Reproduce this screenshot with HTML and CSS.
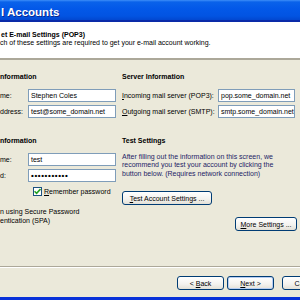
FILE: index.html
```
<!DOCTYPE html>
<html>
<head>
    <title>E-mail Accounts</title>
    <link rel="stylesheet" href="styles.css">
</head>
<body>
    <div class="window">
        <div class="titlebar"><span class="title">l Accounts</span></div>

        <div class="header">
            <div class="header-title">et E-mail Settings (POP3)</div>
            <div class="header-sub">ch of these settings are required to get your e-mail account working.</div>
        </div>

        <div class="content">
            <div class="col col-left">
                <div class="section">nformation</div>
                <div class="field">
                    <span class="label">me:</span>
                    <span class="box">Stephen Coles</span>
                </div>
                <div class="field">
                    <span class="label">ddress:</span>
                    <span class="box">test@some_domain.net</span>
                </div>

                <div class="section section-low">nformation</div>
                <div class="field">
                    <span class="label">me:</span>
                    <span class="box">test</span>
                </div>
                <div class="field">
                    <span class="label">d:</span>
                    <span class="box box-pass">•••••••••••</span>
                </div>
                <div class="check-row">
                    <span class="check">
                        <svg width="7" height="7" viewBox="0 0 7 7"><path d="M0.5 3.2 L2.6 5.4 L6.5 1" fill="none" stroke="#21a121" stroke-width="1.6"/></svg>
                    </span>
                    <span><u>R</u>emember password</span>
                </div>
                <div class="spa">n using Secure Password<br>entication (SPA)</div>
            </div>

            <div class="col col-right">
                <div class="section">Server Information</div>
                <div class="field field-wide">
                    <span class="label"><u>I</u>ncoming mail server (POP3):</span>
                    <span class="box">pop.some_domain.net</span>
                </div>
                <div class="field field-wide">
                    <span class="label"><u>O</u>utgoing mail server (SMTP):</span>
                    <span class="box">smtp.some_domain.net<span class="caret"></span></span>
                </div>

                <div class="section section-low">Test Settings</div>
                <p class="note">After filling out the information on this screen, we recommend you test your account by clicking the button below. (Requires network connection)</p>
                <button class="btn btn-test"><u>T</u>est Account Settings ...</button>
                <div class="more-row">
                    <button class="btn btn-more"><u>M</u>ore Settings ...</button>
                </div>
            </div>
        </div>

        <div class="footer">
            <button class="btn btn-nav">&lt; <u>B</u>ack</button>
            <button class="btn btn-nav btn-default"><u>N</u>ext &gt;</button>
            <button class="btn btn-nav btn-cancel">Cancel</button>
        </div>
    </div>
</body>
</html>
```

FILE: styles.css
```
body {
    margin: 0;
    font-family: "Liberation Sans", Arial, sans-serif;
    font-size: 7px;
    color: #000;
}
.window {
    width: 300px;
    height: 300px;
    overflow: hidden;
    background-color: #ebe9da;
    display: flex;
    flex-direction: column;
    border-bottom: 3px solid #0831d9;
    box-sizing: border-box;
}
.titlebar {
    height: 20px;
    flex-shrink: 0;
    background: linear-gradient(#3d8ef8 0, #0a62ea 2px, #0358e8 9px, #0254e2 16px, #0247d0 20px);
    border-bottom: 2px solid #0a2aa8;
}
.title {
    display: block;
    color: #fff;
    font-size: 11.5px;
    font-weight: bold;
    line-height: 20px;
    padding-left: 1px;
    padding-top: 2px;
    text-shadow: 1px 1px 0 #0b2a92;
}
.header {
    height: 38px;
    flex-shrink: 0;
    background-color: #fff;
    border-bottom: 2px solid #aca899;
    box-sizing: border-box;
    padding-top: 9px;
    line-height: 7.5px;
}
.header-title {
    font-weight: bold;
    padding-left: 1px;
}
.content {
    flex: 1;
    display: flex;
}
.col {
    display: flex;
    flex-direction: column;
    padding-top: 12px;
}
.col-left {
    width: 122px;
}
.col-right {
    flex: 1;
}
.section {
    font-weight: bold;
    line-height: 9px;
    margin-bottom: 8px;
}
.section-low {
    margin-top: 15px;
}
.field {
    display: grid;
    grid-template-columns: 28px 88px;
    align-items: center;
    height: 13px;
    margin-bottom: 3px;
}
.field-wide {
    grid-template-columns: 96px 77px;
}
.box {
    display: block;
    height: 13px;
    box-sizing: border-box;
    border: 1px solid #7f9db9;
    background: #fff;
    line-height: 11px;
    padding: 0 2px;
    white-space: nowrap;
    overflow: hidden;
}
.box-pass {
    font-size: 8px;
    font-weight: bold;
    letter-spacing: 0.6px;
}
.caret {
    display: inline-block;
    width: 0;
    height: 9px;
    border-left: 1px solid #000;
    vertical-align: middle;
}
.check-row {
    display: flex;
    align-items: center;
    gap: 2px;
    padding-left: 33px;
    margin-top: 2px;
    height: 9px;
}
.check {
    width: 9px;
    height: 9px;
    box-sizing: border-box;
    border: 1px solid #1c5180;
    background: #fff;
    display: flex;
    align-items: center;
    justify-content: center;
}
.spa {
    margin-top: 11px;
    line-height: 9px;
}
.note {
    margin: 0;
    width: 158px;
    line-height: 8.4px;
    color: #1d1d66;
}
.btn {
    font-family: inherit;
    font-size: 7px;
    color: #000;
    height: 14px;
    padding: 0 4px;
    border: 1px solid #003c74;
    border-radius: 3px;
    background: linear-gradient(#ffffff, #f3f2ee 60%, #e3e0d6);
    box-sizing: border-box;
    margin: 0;
}
.btn-test {
    align-self: flex-start;
    width: 90px;
    margin-top: 13px;
}
.more-row {
    display: flex;
    justify-content: flex-end;
    padding-right: 3px;
    margin-top: 12px;
}
.btn-more {
    width: 62px;
}
.footer {
    flex-shrink: 0;
    height: 31px;
    box-sizing: border-box;
    border-top: 1px solid #aca899;
    box-shadow: inset 0 1px 0 #fff;
    display: flex;
    gap: 3px;
    padding-left: 177px;
    padding-top: 9px;
}
.btn-nav {
    width: 47px;
    flex-shrink: 0;
}
.btn-default {
    box-shadow: inset 0 0 0 1px #b6cdf2;
}
.btn-cancel {
    margin-left: 5px;
}
```
